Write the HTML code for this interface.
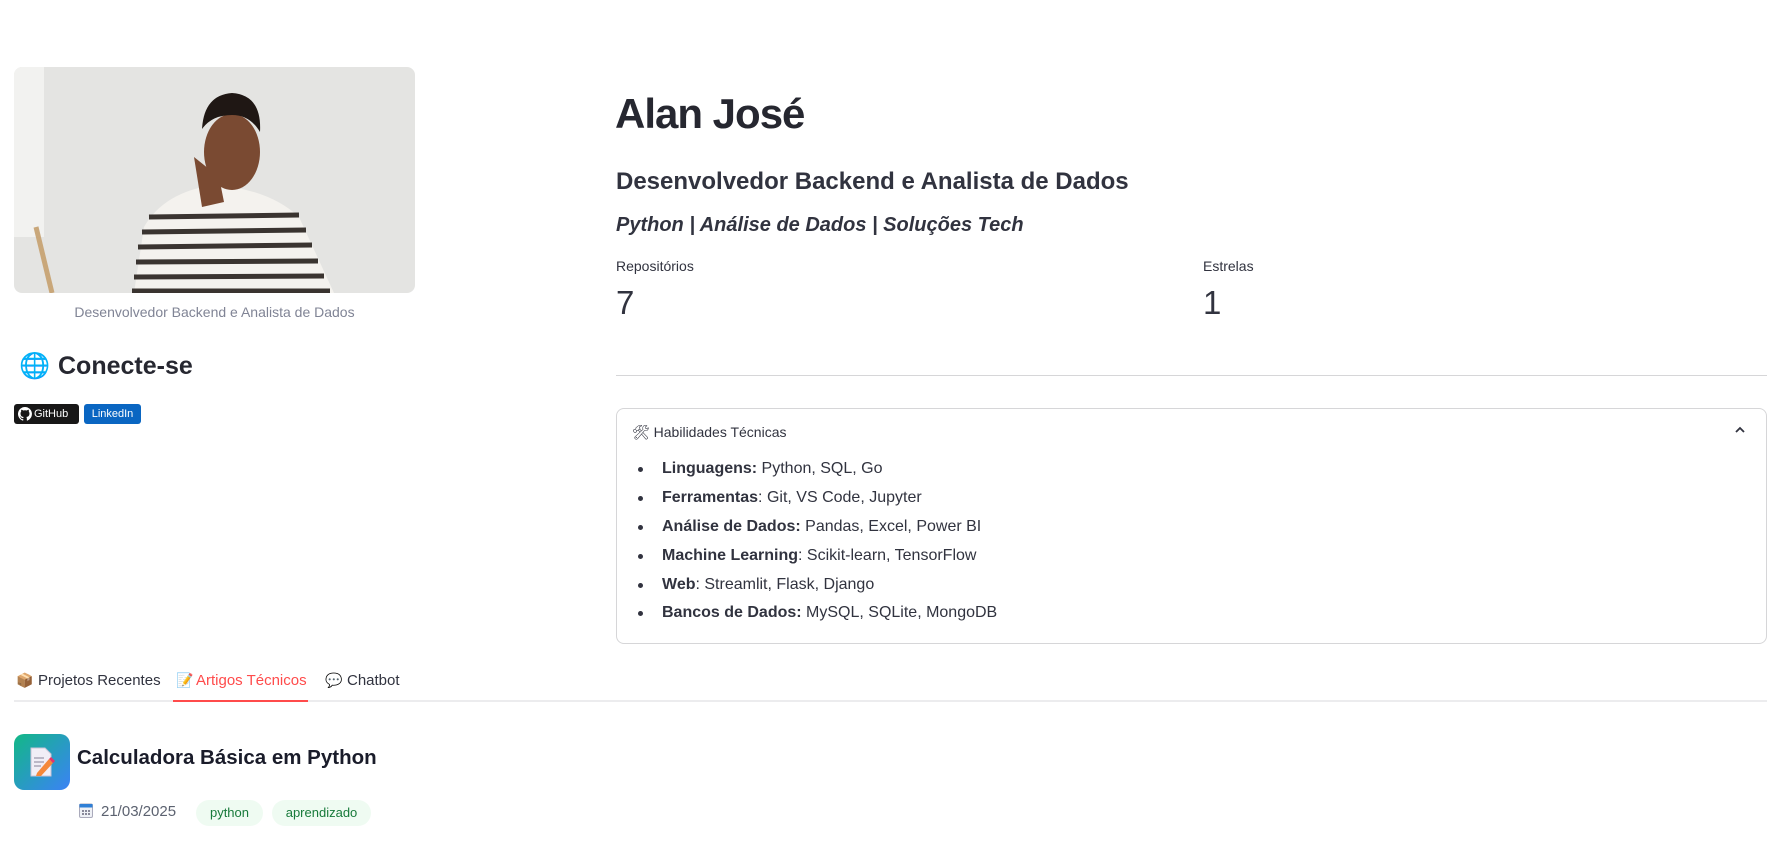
<!DOCTYPE html>
<html><head><meta charset="utf-8"><style>
*{margin:0;padding:0;box-sizing:border-box}
body{width:1790px;height:848px;background:#fff;font-family:"Liberation Sans",sans-serif;color:#31333f;position:relative;overflow:hidden}
.a{position:absolute;white-space:nowrap}
.h{font-family:"Liberation Sans",sans-serif;font-weight:700;color:#262730}
ul{list-style:none}
li{position:absolute;left:662px;font-size:16px;color:#31333f}
li b{font-weight:700}
li:before{content:"";position:absolute;left:-24px;top:7px;width:5px;height:5px;border-radius:50%;background:#31333f}
.pill{position:absolute;top:800px;height:26px;border-radius:13px;background:#effbf2;color:#177a3a;font-size:13px;line-height:26px;text-align:center}
</style></head><body>

<svg class="a" style="left:14px;top:67px" width="401" height="226" viewBox="0 0 401 226">
<defs><clipPath id="c"><rect width="401" height="226" rx="8"/></clipPath></defs>
<g clip-path="url(#c)">
<rect width="401" height="226" fill="#e4e4e2"/>
<rect x="0" y="0" width="30" height="170" fill="#f2f2f0"/>
<line x1="22" y1="160" x2="38" y2="226" stroke="#c9a77a" stroke-width="5"/>
<path d="M120 226 L130 160 Q150 125 200 118 Q255 122 285 150 L320 226Z" fill="#f4f2ee"/>
<g stroke="#3a3430" stroke-width="5">
<line x1="135" y1="150" x2="285" y2="148"/><line x1="128" y1="165" x2="292" y2="163"/>
<line x1="124" y1="180" x2="298" y2="178"/><line x1="122" y1="195" x2="304" y2="194"/>
<line x1="120" y1="210" x2="310" y2="209"/><line x1="118" y1="224" x2="316" y2="224"/></g>
<ellipse cx="218" cy="85" rx="28" ry="38" fill="#7a4a32"/>
<path d="M188 62 Q190 28 218 26 Q248 28 246 65 Q236 48 218 48 Q198 48 188 62Z" fill="#1f1714"/>
<path d="M180 90 L188 140 L210 135 L205 110 Z" fill="#7a4a32"/>
</g></svg>
<div class="a" style="left:14px;width:401px;top:304px;text-align:center;font-size:14px;color:#808495">Desenvolvedor Backend e Analista de Dados</div>

<div class="a" style="left:19px;top:352px;font-size:25px">🌐</div>
<div class="a h" style="left:58px;top:352px;font-size:25px;font-weight:600">Conecte-se</div>

<div class="a" style="left:14px;top:404px;width:65px;height:20px;background:#181717;border-radius:3px;color:#fff;font-size:11px;line-height:20px;padding-left:20px">GitHub</div>
<svg class="a" style="left:18px;top:407px" width="14" height="14" viewBox="0 0 16 16"><path fill="#fff" d="M8 0a8 8 0 0 0-2.5 15.6c.4 0 .5-.2.5-.4v-1.5c-2.2.5-2.7-1-2.7-1-.4-.9-.9-1.2-.9-1.2-.7-.5.1-.5.1-.5.8.1 1.2.8 1.2.8.7 1.3 1.9.9 2.3.7.1-.5.3-.9.5-1.1-1.8-.2-3.6-.9-3.6-4 0-.9.3-1.6.8-2.1-.1-.2-.4-1 .1-2.1 0 0 .7-.2 2.2.8a7.500 7.500 0 0 1 4 0c1.5-1 2.200-.8 2.200-.8.4 1.100.2 1.900.1 2.100.5.6.8 1.300.8 2.100 0 3.100-1.900 3.800-3.600 4 .3.3.6.8.6 1.500v2.200c0 .2.1.5.6.4A8 8 0 0 0 8 0z"/></svg>
<div class="a" style="left:84px;top:404px;width:57px;height:20px;background:#0a66c2;border-radius:3px;color:#fff;font-size:11px;line-height:20px;text-align:center">LinkedIn</div>

<div class="a h" style="left:615px;top:90px;font-size:42px;letter-spacing:-1px">Alan José</div>
<div class="a h" style="left:616px;top:168px;font-size:24px;font-weight:600;color:#31333f">Desenvolvedor Backend e Analista de Dados</div>
<div class="a h" style="left:616px;top:214px;font-size:20px;font-style:italic;color:#31333f">Python | Análise de Dados | Soluções Tech</div>
<div class="a" style="left:616px;top:258px;font-size:14px">Repositórios</div>
<div class="a" style="left:616px;top:284px;font-size:33px;font-weight:300">7</div>
<div class="a" style="left:1203px;top:258px;font-size:14px">Estrelas</div>
<div class="a" style="left:1203px;top:284px;font-size:33px;font-weight:300">1</div>
<div class="a" style="left:616px;top:375px;width:1151px;height:1px;background:#d6d6d8"></div>

<div class="a" style="left:616px;top:408px;width:1151px;height:236px;border:1px solid #d6d6d8;border-radius:8px"></div>
<div class="a" style="left:632px;top:424px;font-size:14px">🛠 Habilidades Técnicas</div>
<svg class="a" style="left:1734px;top:425px" width="12" height="10" viewBox="0 0 12 10"><path d="M2 7 L6 3 L10 7" stroke="#31333f" stroke-width="1.8" fill="none"/></svg>
<ul>
<li style="top:460px"><b>Linguagens:</b> Python, SQL, Go</li>
<li style="top:489px"><b>Ferramentas</b>: Git, VS Code, Jupyter</li>
<li style="top:518px"><b>Análise de Dados:</b> Pandas, Excel, Power BI</li>
<li style="top:547px"><b>Machine Learning</b>: Scikit-learn, TensorFlow</li>
<li style="top:576px"><b>Web</b>: Streamlit, Flask, Django</li>
<li style="top:604px"><b>Bancos de Dados:</b> MySQL, SQLite, MongoDB</li>
</ul>

<div class="a" style="left:16px;top:672px;font-size:14px">📦</div>
<div class="a" style="left:38px;top:672px;font-size:15px">Projetos Recentes</div>
<div class="a" style="left:176px;top:672px;font-size:14px">📝</div>
<div class="a" style="left:196px;top:672px;font-size:15px;color:#ff4b4b">Artigos Técnicos</div>
<div class="a" style="left:325px;top:672px;font-size:14px;color:#aaa">💬</div>
<div class="a" style="left:347px;top:672px;font-size:15px">Chatbot</div>
<div class="a" style="left:14px;top:700px;width:1753px;height:2px;background:#ececee"></div>
<div class="a" style="left:173px;top:700px;width:135px;height:2px;background:#ff4b4b"></div>

<div class="a" style="left:14px;top:734px;width:56px;height:56px;border-radius:10px;background:linear-gradient(135deg,#12b886,#3b82f6)"></div>
<svg class="a" style="left:29px;top:747px" width="26" height="30" viewBox="0 0 26 30"><path d="M2 1h14l6 6v22H2z" fill="#f1eef6" stroke="#c9c3d6"/><g stroke="#9a95a8" stroke-width="1.2"><line x1="5" y1="11" x2="15" y2="11"/><line x1="5" y1="15" x2="15" y2="15"/><line x1="5" y1="19" x2="12" y2="19"/></g><path d="M8 26 L20 12 L24 16 L12 29 L7 29Z" fill="#f5883a"/><path d="M20 12 L22 10 L26 14 L24 16Z" fill="#e6336b"/></svg>
<div class="a h" style="left:77px;top:746px;font-size:20.5px;font-weight:600;color:#1a1c2a">Calculadora Básica em Python</div>

<svg class="a" style="left:79px;top:803px" width="14" height="15" viewBox="0 0 14 15"><rect x="0.5" y="1" width="13" height="13.5" rx="1.5" fill="#eef0f5" stroke="#aab"/><rect x="0.5" y="1" width="13" height="3.5" fill="#2f7fd6"/><g fill="#889"><rect x="3" y="7" width="2" height="2"/><rect x="6" y="7" width="2" height="2"/><rect x="9" y="7" width="2" height="2"/><rect x="3" y="10" width="2" height="2"/><rect x="6" y="10" width="2" height="2"/><rect x="9" y="10" width="2" height="2"/></g></svg>
<div class="a" style="left:101px;top:803px;font-size:15px;color:#5c6270">21/03/2025</div>
<div class="pill" style="left:196px;width:67px">python</div>
<div class="pill" style="left:272px;width:99px">aprendizado</div>
</body></html>
